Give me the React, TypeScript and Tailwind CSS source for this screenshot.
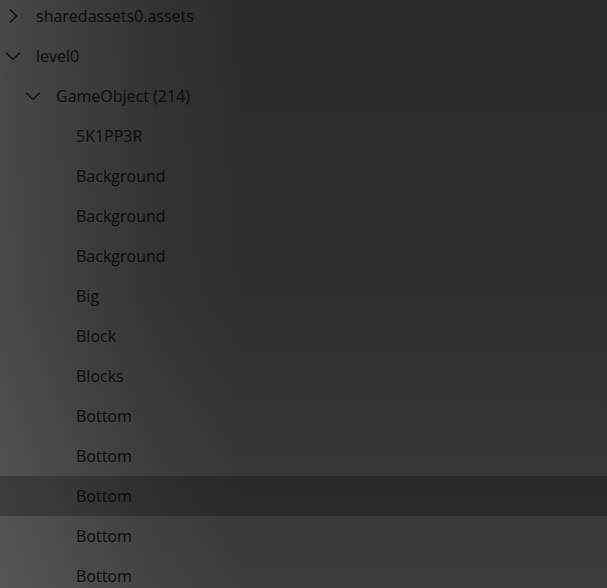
import { ReactNode } from "react";

type Node = { label: string; depth: number; chevron?: "right" | "down"; selected?: boolean };

const rows: Node[] = [
  { label: "sharedassets0.assets", depth: 0, chevron: "right" },
  { label: "level0", depth: 0, chevron: "down" },
  { label: "GameObject (214)", depth: 1, chevron: "down" },
  { label: "5K1PP3R", depth: 2 },
  { label: "Background", depth: 2 },
  { label: "Background", depth: 2 },
  { label: "Background", depth: 2 },
  { label: "Big", depth: 2 },
  { label: "Block", depth: 2 },
  { label: "Blocks", depth: 2 },
  { label: "Bottom", depth: 2 },
  { label: "Bottom", depth: 2 },
  { label: "Bottom", depth: 2, selected: true },
  { label: "Bottom", depth: 2 },
  { label: "Bottom", depth: 2 },
];

function Chevron({ dir }: { dir: "right" | "down" }) {
  return (
    <svg width="26" height="26" viewBox="0 0 26 26" fill="none" stroke="#0e0e0e" strokeWidth="1.2">
      {dir === "right" ? <path d="M10 6.5l6.5 6.5L10 19.5" /> : <path d="M6 9.5l7 7 7-7" />}
    </svg>
  );
}

const indent: Record<number, string> = { 0: "pl-0", 1: "pl-5", 2: "pl-10" };

function Row({ node }: { node: Node }): ReactNode {
  return (
    <div className={`flex h-10 items-center ${indent[node.depth]} ${node.selected ? "bg-black/25" : ""}`}>
      <div className="flex w-9 shrink-0 items-center">
        {node.chevron && <Chevron dir={node.chevron} />}
      </div>
      <span className="-mt-px text-[16px] leading-6 text-[#0b0b0b]">{node.label}</span>
    </div>
  );
}

export default function App() {
  return (
    <div className="h-screen w-full overflow-hidden bg-[linear-gradient(to_right,rgba(255,255,255,0.13)_0%,rgba(255,255,255,0.03)_25%,transparent_40%),linear-gradient(to_bottom,#2c2c2c_0%,#2e2e2e_50%,#3d3d3d_100%)] font-['Open_Sans',sans-serif]">
      <div className="-mt-1 flex flex-col">
        {rows.map((n, i) => (
          <Row key={i} node={n} />
        ))}
      </div>
    </div>
  );
}
